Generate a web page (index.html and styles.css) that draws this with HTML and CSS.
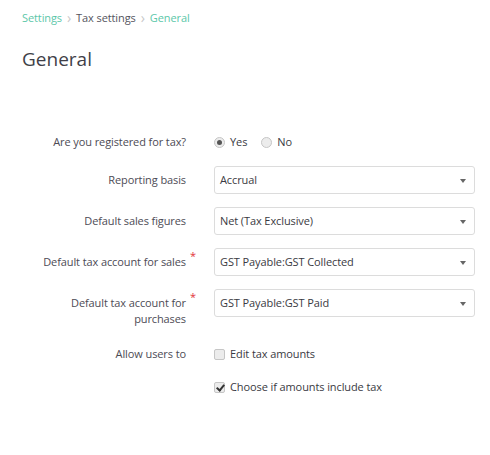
FILE: index.html
```html
<!DOCTYPE html>
<html lang="en">
<head>
<meta charset="utf-8">
<title>General - Tax settings</title>
<link rel="stylesheet" href="styles.css">
</head>
<body>
<div class="page">
  <nav class="crumbs">
    <a class="crumb-link" href="#">Settings</a>
    <span class="sep">&#8250;</span>
    <span class="crumb-current">Tax settings</span>
    <span class="sep">&#8250;</span>
    <a class="crumb-link" href="#">General</a>
  </nav>
  <h1 class="title">General</h1>

  <form class="form">
    <div class="row row-radio">
      <div class="label">Are you registered for tax?</div>
      <div class="control inline">
        <label class="opt"><span class="radio checked"></span>Yes</label>
        <label class="opt"><span class="radio"></span>No</label>
      </div>
    </div>

    <div class="row">
      <div class="label">Reporting basis</div>
      <div class="control"><div class="select">Accrual</div></div>
    </div>

    <div class="row">
      <div class="label">Default sales figures</div>
      <div class="control"><div class="select">Net (Tax Exclusive)</div></div>
    </div>

    <div class="row">
      <div class="label required">Default tax account for sales</div>
      <div class="control"><div class="select">GST Payable:GST Collected</div></div>
    </div>

    <div class="row">
      <div class="label required">Default tax account for purchases</div>
      <div class="control"><div class="select">GST Payable:GST Paid</div></div>
    </div>

    <div class="row row-check first-check">
      <div class="label">Allow users to</div>
      <div class="control"><label class="opt"><span class="check"></span>Edit tax amounts</label></div>
    </div>

    <div class="row row-check">
      <div class="label"></div>
      <div class="control"><label class="opt"><span class="check checked"></span>Choose if amounts include tax</label></div>
    </div>
  </form>
</div>
</body>
</html>
```

FILE: styles.css
```css
* { box-sizing: border-box; }
html, body { margin: 0; padding: 0; background: #fff; }
body {
  font-family: "Open Sans", "Liberation Sans", sans-serif;
  font-size: 11px;
  letter-spacing: -0.1px;
  color: #4a4a55;
}
.page { padding: 10px 15px 0 22px; }

.crumbs {
  display: flex;
  align-items: center;
  gap: 5px;
  height: 16px;
  line-height: 16px;
  font-size: 11px;
}
.crumb-link { color: #5cc7a9; text-decoration: none; }
.crumb-current { color: #55555e; }
.sep { color: #c8c8c8; font-size: 14px; }

.title {
  margin: 19px 0 0;
  font-size: 19px;
  font-weight: 400;
  line-height: 28px;
  color: #3f3f48;
  letter-spacing: 0;
}

.form {
  margin-top: 58px;
  display: flex;
  flex-direction: column;
  gap: 13px;
}
.row {
  display: flex;
  align-items: flex-start;
  gap: 28px;
}
.label {
  position: relative;
  width: 164px;
  flex: none;
  text-align: right;
  padding-top: 6px;
  line-height: 16px;
  color: #4d4b55;
}
.label.required::after {
  content: "*";
  position: absolute;
  right: -10px;
  top: 2px;
  color: #e2343a;
  font-size: 11px;
  line-height: 11px;
}
.control { width: 261px; flex: none; }
.inline { display: flex; gap: 14px; align-items: center; }

.row-radio { height: 22px; }
.row-radio .label { padding-top: 3px; }
.row-radio .control { height: 22px; }

.select {
  position: relative;
  height: 28px;
  line-height: 26px;
  border: 1px solid #dcdcdc;
  border-radius: 3px;
  padding-left: 5px;
  color: #3a3a42;
  background: #fff;
}
.select::after {
  content: "";
  position: absolute;
  right: 8px;
  top: 12px;
  border-left: 3px solid transparent;
  border-right: 3px solid transparent;
  border-top: 4px solid #666;
}

.opt {
  display: inline-flex;
  align-items: center;
  gap: 5px;
  color: #3a3a42;
  line-height: 16px;
}
.radio {
  width: 11px;
  height: 11px;
  border-radius: 50%;
  border: 1px solid #c6c6c6;
  background: #ececec;
  position: relative;
}
.radio.checked::after {
  content: "";
  position: absolute;
  left: 2px; top: 2px;
  width: 5px; height: 5px;
  border-radius: 50%;
  background: #555;
}
.row-check { height: 20px; }
.row-check .label { padding-top: 2px; }
.row-check .control { height: 20px; display: flex; align-items: center; }
.first-check { margin-top: 4px; }
.check {
  width: 11px;
  height: 11px;
  border-radius: 2px;
  border: 1px solid #c6c6c6;
  background: #ececec;
  position: relative;
}
.check.checked::after {
  content: "";
  position: absolute;
  left: 3px; top: 0px;
  width: 3px; height: 6px;
  border-right: 2px solid #333;
  border-bottom: 2px solid #333;
  transform: rotate(40deg);
}
```
